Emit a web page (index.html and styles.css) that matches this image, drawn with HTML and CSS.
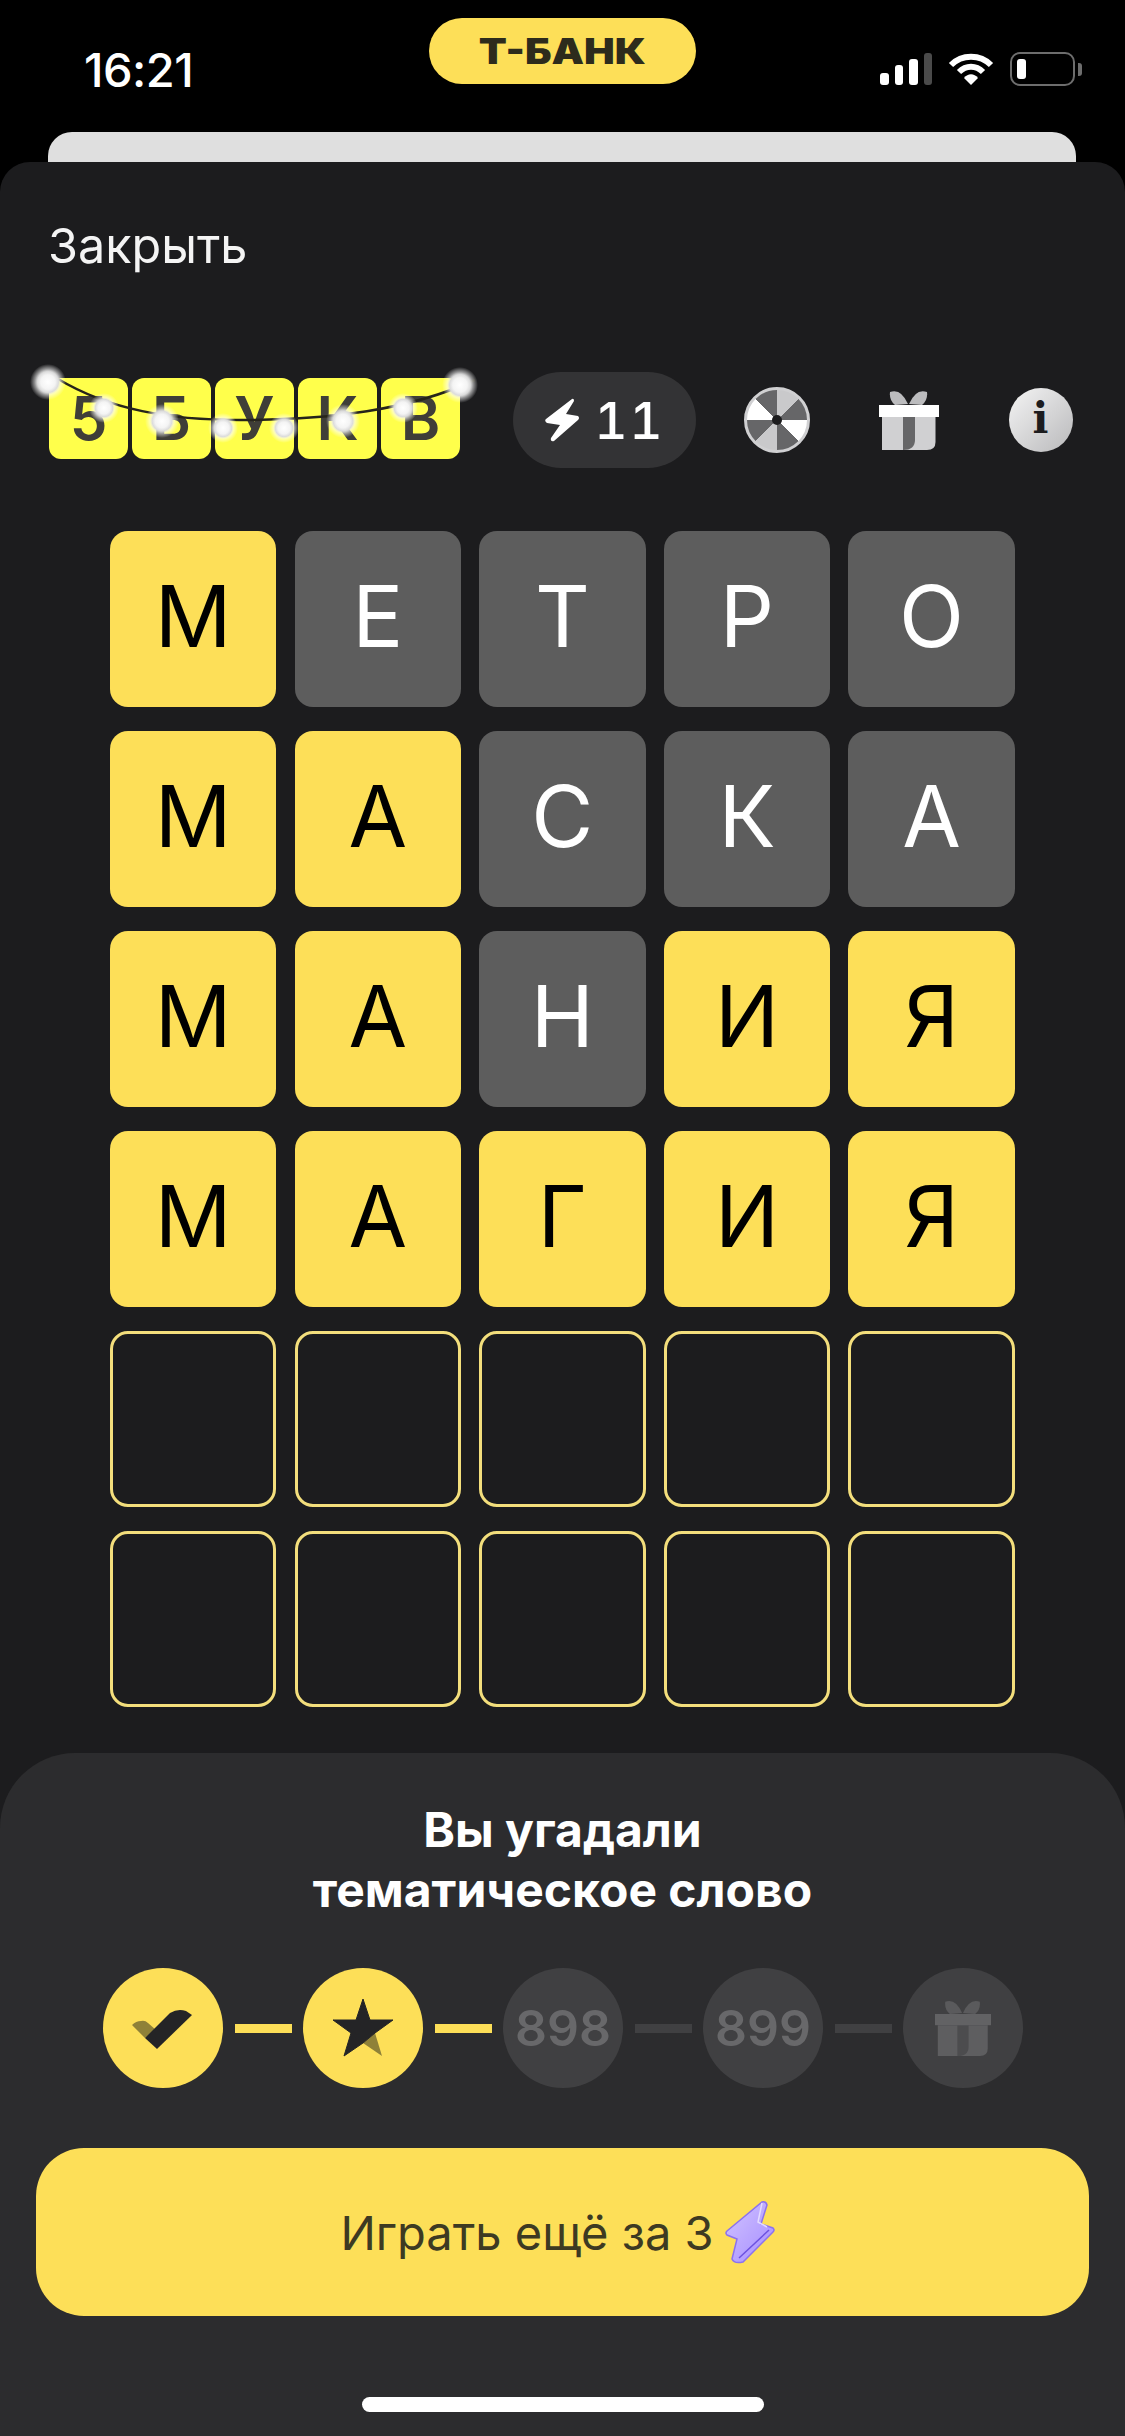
FILE: index.html
```html
<!DOCTYPE html>
<html lang="ru">
<head>
  <meta charset="UTF-8">
  <meta name="viewport" content="width=device-width, initial-scale=1.0">
  <title>5 букв</title>
  <link rel="stylesheet" href="styles.css">
</head>
<body>
  <header class="status">
    <span class="time">16:21</span>
    <div class="bank"><span>Т-БАНК</span></div>
    <div class="indicators">
      <div class="signal">
        <i class="s1"></i><i class="s2"></i><i class="s3"></i><i class="s4"></i>
      </div>
      <svg class="wifi" viewBox="0 0 46 32">
        <path d="M3 12 C14 1 32 1 43 12" fill="none" stroke="#fff" stroke-width="6"/>
        <path d="M11 19 C18 12 28 12 35 19" fill="none" stroke="#fff" stroke-width="6"/>
        <path d="M16 25 C20 20 26 20 30 25 L23 32Z" fill="#fff"/>
      </svg>
      <div class="battery"><i class="charge"></i></div>
      <i class="battery-cap"></i>
    </div>
  </header>

  <div class="back-card"></div>

  <main class="sheet">
    <div class="close">Закрыть</div>

    <div class="toolbar">
      <div class="banner">
        <span class="banner-tile">5</span>
        <span class="banner-tile">Б</span>
        <span class="banner-tile">У</span>
        <span class="banner-tile">К</span>
        <span class="banner-tile">В</span>
        <!-- garland hangs over the tiles -->
        <svg class="garland" viewBox="0 0 453 90">
          <defs>
            <radialGradient id="bulb">
              <stop offset="0" stop-color="#fff"/>
              <stop offset="0.4" stop-color="#f4f4f4"/>
              <stop offset="0.58" stop-color="#dcdcdc"/>
              <stop offset="0.72" stop-color="#fff" stop-opacity="0.55"/>
              <stop offset="1" stop-color="#fff" stop-opacity="0"/>
            </radialGradient>
          </defs>
          <path d="M18 19 C70 50 130 60 200 60 C290 60 370 50 435 20" fill="none" stroke="#26241a" stroke-width="2.5"/>
          <circle cx="8" cy="22" r="18" fill="url(#bulb)"/>
          <circle cx="64" cy="48" r="15" fill="url(#bulb)"/>
          <circle cx="122" cy="61" r="17" fill="url(#bulb)"/>
          <circle cx="183" cy="68" r="15" fill="url(#bulb)"/>
          <circle cx="244" cy="68" r="15" fill="url(#bulb)"/>
          <circle cx="303" cy="61" r="17" fill="url(#bulb)"/>
          <circle cx="363" cy="48" r="15" fill="url(#bulb)"/>
          <circle cx="420" cy="25" r="18" fill="url(#bulb)"/>
        </svg>
      </div>

      <div class="energy">
        <svg class="energy-bolt" viewBox="0 0 35 44">
          <path d="M27 1 Q29 0 29 3 L21 16 L33 18 Q35 20 33 22 L9 43 Q5 44 6 40 L15 27 L2 25 Q-1 23 1 21Z" fill="#fff"/>
        </svg>
        <span class="energy-count">11</span>
      </div>

      <div class="wheel"><i class="hub"></i></div>

      <svg class="gift" viewBox="0 0 60 60">
        <path d="M11 2 Q22 -2 29 14 L16 15 Q10 10 11 2Z" fill="#bcbcbe"/>
        <path d="M48 2 Q37 -2 30 14 L43 15 Q49 10 48 2Z" fill="#bcbcbe"/>
        <path d="M3 27 H56.500 V52 Q56.500 60 48 60 H3Z" fill="#d0d0d2"/>
        <path d="M24 27 H36 V50 Q36 60 24 60Z" fill="#666668"/>
        <rect x="0" y="15" width="60" height="12" fill="#fff"/>
      </svg>

      <div class="info">i</div>
    </div>

    <div class="board">
      <div class="tile hit">М</div><div class="tile off">Е</div><div class="tile off">Т</div><div class="tile off">Р</div><div class="tile off">О</div>
      <div class="tile hit">М</div><div class="tile hit">А</div><div class="tile off">С</div><div class="tile off">К</div><div class="tile off">А</div>
      <div class="tile hit">М</div><div class="tile hit">А</div><div class="tile off">Н</div><div class="tile hit">И</div><div class="tile hit">Я</div>
      <div class="tile hit">М</div><div class="tile hit">А</div><div class="tile hit">Г</div><div class="tile hit">И</div><div class="tile hit">Я</div>
      <div class="tile empty"></div><div class="tile empty"></div><div class="tile empty"></div><div class="tile empty"></div><div class="tile empty"></div>
      <div class="tile empty"></div><div class="tile empty"></div><div class="tile empty"></div><div class="tile empty"></div><div class="tile empty"></div>
    </div>

    <section class="panel">
      <h2 class="panel-title">Вы угадали<br>тематическое слово</h2>

      <div class="progress">
        <div class="step done">
          <svg viewBox="0 0 120 120">
            <path d="M29 57 Q33 53 38 53 Q42 52 45 55 L53 62 L42 70Z" fill="#8f8138"/>
            <path d="M42 70 L67 45 Q75 40 83 43 L89 47 L54 81Z" fill="#242426"/>
          </svg>
        </div>
        <i class="link on"></i>
        <div class="step done">
          <svg viewBox="0 0 120 120">
            <path d="M60 75 L72 65 L79 88Z" fill="#8f8138"/>
            <path d="M60 31 L67 52 L90 52 L72 65 L60 75 L41 88 L48 65 L30 52 L53 52Z" fill="#242426" stroke="#242426" stroke-width="1" stroke-linejoin="round"/>
          </svg>
        </div>
        <i class="link on"></i>
        <div class="step">898</div>
        <i class="link"></i>
        <div class="step">899</div>
        <i class="link"></i>
        <div class="step">
          <svg class="gift-dim" viewBox="0 0 60 60">
            <path d="M11 2 Q22 -2 29 14 L16 15 Q10 10 11 2Z" fill="#5a5a5c"/>
            <path d="M48 2 Q37 -2 30 14 L43 15 Q49 10 48 2Z" fill="#5a5a5c"/>
            <path d="M3 27 H56.500 V52 Q56.500 60 48 60 H3Z" fill="#5e5e60"/>
            <path d="M24 27 H36 V50 Q36 60 24 60Z" fill="#4c4c4e"/>
            <rect x="0" y="15" width="60" height="12" fill="#626264"/>
          </svg>
        </div>
      </div>

      <button class="play" type="button">
        Играть ещё за 3
        <svg class="play-bolt" viewBox="0 0 50 65">
          <defs>
            <linearGradient id="violet" x1="0" y1="0" x2="1" y2="1">
              <stop offset="0" stop-color="#d2c4ff"/>
              <stop offset="1" stop-color="#a58cff"/>
            </linearGradient>
          </defs>
          <path d="M37 2 Q41 1 42 5 L36 24 L48 28 Q50 30 48 32 L18 62 Q9 64 7 59 L12 39 L2 35 Q0 33 2 31Z" fill="url(#violet)" stroke="#8c72ee" stroke-width="1.500"/>
          <path d="M14 58 L44 30" fill="none" stroke="#6d52e0" stroke-width="1.500"/>
          <path d="M37 3 L33 22 L42 27" fill="none" stroke="#e4dcff" stroke-width="1.500"/>
        </svg>
      </button>

      <div class="home"></div>
    </section>
  </main>
</body>
</html>
```

FILE: styles.css
```css
* {
  box-sizing: border-box;
}

html, body {
  margin: 0;
  padding: 0;
}

body {
  width: 1125px;
  height: 2436px;
  display: flex;
  flex-direction: column;
  overflow: hidden;
  background: #000;
  color: #fff;
  font-family: Inter, "Noto Sans", sans-serif;
}

i {
  display: block;
}

/* status bar */
.status {
  height: 132px;
  padding: 18px 47px 0;
  display: grid;
  grid-template-columns: 1fr auto 1fr;
  align-items: start;
}

.time {
  margin: 26px 0 0 37px;
  font-size: 47px;
  line-height: 52px;
  font-weight: 500;
  letter-spacing: -0.5px;
}

.bank {
  width: 267px;
  height: 66px;
  border-radius: 33px;
  background: #fddf58;
  color: #2d2b1c;
  font-size: 35px;
  font-weight: 900;
  line-height: 66px;
  text-align: center;
}

/* the logo lettering is wider than Inter Black */
.bank span {
  display: inline-block;
  transform: scaleX(1.17);
}

.indicators {
  justify-self: end;
  margin: 34px -4px 0 0;
  height: 34px;
  display: flex;
  align-items: center;
}

.signal {
  display: flex;
  align-items: flex-end;
  gap: 6px;
  height: 32px;
}

.signal i {
  width: 8.500px;
  border-radius: 3px;
  background: #fff;
}

.s1 { height: 12px; }
.s2 { height: 20px; }
.s3 { height: 26px; }
.signal .s4 { height: 32px; background: #4a4a4a; }

.wifi {
  width: 46px;
  height: 32px;
  margin-left: 16px;
}

.battery {
  width: 65px;
  height: 34px;
  margin-left: 16px;
  padding: 5px;
  border: 2px solid #6d6d6d;
  border-radius: 10px;
}

.charge {
  width: 9px;
  height: 20px;
  border-radius: 3px;
  background: #fff;
}

.battery-cap {
  width: 4px;
  height: 13px;
  margin-left: 3px;
  border-radius: 0 3px 3px 0;
  background: #6d6d6d;
}

.back-card {
  height: 30px;
  margin: 0 49px 0 48px;
  border-radius: 24px 24px 0 0;
  background: #dfdfdf;
}

/* main sheet */
.sheet {
  flex: 1;
  display: flex;
  flex-direction: column;
  border-radius: 30px 30px 0 0;
  background: #1c1c1e;
}

.close {
  margin: 56px 0 0 48px;
  font-size: 48.500px;
  line-height: 56px;
  color: #f4f4f4;
}

.toolbar {
  height: 96px;
  margin-top: 98px;
  padding-left: 49px;
  display: flex;
  align-items: center;
}

.banner {
  position: relative;
  display: flex;
  gap: 4px;
  margin-top: -3px;
}

.banner-tile {
  width: 79px;
  height: 81px;
  border-radius: 12px;
  background: #ffff4b;
  color: #3f3e38;
  font-size: 60px;
  font-weight: 600;
  line-height: 81px;
  text-align: center;
}

.garland {
  position: absolute;
  left: -9px;
  top: -18px;
  width: 453px;
  height: 90px;
  overflow: visible;
}

.energy {
  width: 183px;
  height: 96px;
  margin-left: 52.500px;
  display: flex;
  align-items: center;
  justify-content: center;
  gap: 14px;
  border-radius: 48px;
  background: #333335;
  font-size: 51px;
  font-weight: 500;
}

.energy-count {
  letter-spacing: 2px;
  margin-right: -2px;
  font-feature-settings: "tnum";
}

.energy-bolt {
  width: 35px;
  height: 44px;
}

.wheel {
  position: relative;
  width: 66px;
  height: 66px;
  margin-left: 48px;
  border: 3px solid #d0d0d2;
  border-radius: 50%;
  background: conic-gradient(#c9c9cb 0 45deg, #666668 45deg 90deg, #fff 90deg 135deg, #666668 135deg 180deg, #c9c9cb 180deg 225deg, #666668 225deg 270deg, #fff 270deg 315deg, #666668 315deg 360deg);
}

.hub {
  position: absolute;
  left: 50%;
  top: 50%;
  width: 10px;
  height: 10px;
  margin: -5px 0 0 -5px;
  border-radius: 50%;
  background: #1c1c1e;
}

.gift {
  width: 60px;
  height: 60px;
  margin-left: 69px;
}

.info {
  width: 64px;
  height: 64px;
  margin-left: 70px;
  border-radius: 50%;
  background: linear-gradient(135deg, #f4f4f4, #b9b9bb);
  color: #1c1c1e;
  font-family: "DejaVu Serif", serif;
  font-size: 42px;
  font-weight: 700;
  line-height: 62px;
  text-align: center;
}

/* word grid */
.board {
  margin: 63px 0 0 110px;
  display: grid;
  grid-template-columns: repeat(5, 166.400px);
  grid-auto-rows: 176px;
  column-gap: 18.200px;
  row-gap: 24px;
}

.tile {
  display: flex;
  align-items: center;
  justify-content: center;
  padding-bottom: 5px;
  border-radius: 18px;
  font-size: 85px;
  line-height: 1;
}

.hit {
  background: #fddf58;
  color: #000;
}

.off {
  background: #5d5d5d;
  color: #fff;
}

.empty {
  border: 3px solid #f3de7c;
}

/* bottom panel */
.panel {
  margin-top: auto;
  height: 683px;
  padding-top: 47px;
  border-radius: 75px 75px 0 0;
  background: #2c2c2e;
}

.panel-title {
  margin: 0;
  font-size: 48px;
  line-height: 60px;
  font-weight: 700;
  text-align: center;
}

.progress {
  margin-top: 48px;
  padding-left: 103px;
  display: flex;
  align-items: center;
}

.step {
  width: 120px;
  height: 120px;
  flex: none;
  display: flex;
  align-items: center;
  justify-content: center;
  border-radius: 50%;
  background: #404042;
  color: #68686a;
  font-size: 50px;
  font-weight: 600;
}

.done {
  background: #fddf58;
}

.done svg {
  width: 120px;
  height: 120px;
}

.gift-dim {
  width: 56px;
  height: 56px;
}

.link {
  width: 57px;
  height: 9px;
  margin: 0 11.500px;
  flex: none;
  background: #404042;
}

.link.on {
  background: #fddf58;
}

.play {
  width: 1053px;
  height: 168px;
  margin: 60px 0 0 36px;
  padding: 0 10px 0 0;
  display: flex;
  align-items: center;
  justify-content: center;
  gap: 11px;
  border: none;
  border-radius: 48px;
  background: #fddf58;
  color: #3d3a22;
  font-family: inherit;
  font-size: 47px;
}

.play-bolt {
  width: 50px;
  height: 65px;
}

.home {
  width: 402px;
  height: 15px;
  margin: 81px 0 0 362px;
  border-radius: 8px;
  background: #fff;
}
```
